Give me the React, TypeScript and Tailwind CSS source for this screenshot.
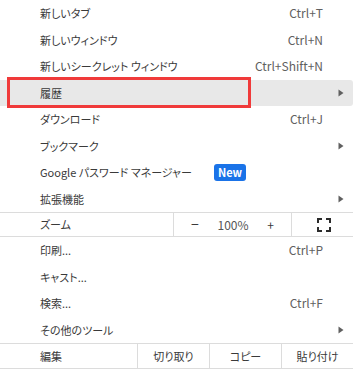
import React from "react";

type Item = {
  label: string;
  shortcut?: string;
  submenu?: boolean;
  badge?: string;
  active?: boolean;
};

const topItems: Item[] = [
  { label: "新しいタブ", shortcut: "Ctrl+T" },
  { label: "新しいウィンドウ", shortcut: "Ctrl+N" },
  { label: "新しいシークレット ウィンドウ", shortcut: "Ctrl+Shift+N" },
  { label: "履歴", submenu: true, active: true },
  { label: "ダウンロード", shortcut: "Ctrl+J" },
  { label: "ブックマーク", submenu: true },
  { label: "Google パスワード マネージャー", badge: "New" },
  { label: "拡張機能", submenu: true },
];

const midItems: Item[] = [
  { label: "印刷...", shortcut: "Ctrl+P" },
  { label: "キャスト..." },
  { label: "検索...", shortcut: "Ctrl+F" },
  { label: "その他のツール", submenu: true },
];

function Arrow() {
  return (
    <svg width="6" height="8" viewBox="0 0 6 8" className="mr-[9px]">
      <path d="M0.5 0.5 L5.5 4 L0.5 7.5 Z" fill="#606060" />
    </svg>
  );
}

function Row({ item }: { item: Item }) {
  return (
    <div
      className={`flex h-[26.5px] items-center pl-[40px] ${
        item.active ? "bg-[#e8e8e8] rounded-r-[3px]" : ""
      }`}
    >
      {item.badge ? (
        <div className="flex flex-1 items-center">
          <span className="w-[174px] whitespace-nowrap">{item.label}</span>
          <span className="rounded-[3px] bg-[#1a73e8] px-[4px] text-[11px] font-bold leading-[17px] text-white">
            {item.badge}
          </span>
        </div>
      ) : (
        <span className="flex-1 whitespace-nowrap">{item.label}</span>
      )}
      {item.shortcut && (
        <span className="pr-[30px] text-[12px] text-[#606060]">{item.shortcut}</span>
      )}
      {item.submenu && <Arrow />}
    </div>
  );
}

function FullscreenIcon() {
  return (
    <svg width="14" height="14" viewBox="0 0 14 14" fill="none" stroke="#2b2b2b" strokeWidth="2">
      <path d="M1 5 V1 H5" />
      <path d="M9 1 H13 V5" />
      <path d="M13 9 V13 H9" />
      <path d="M5 13 H1 V9" />
    </svg>
  );
}

export default function App() {
  return (
    <div
      className="relative h-[374px] w-[353px] overflow-hidden bg-white text-[11px] text-[#3a3a3a] [font-feature-settings:'palt']"
      style={{ fontFamily: '"Noto Sans CJK JP", "Noto Sans", sans-serif' }}
    >
      {topItems.map((it) => (
        <Row key={it.label} item={it} />
      ))}

      {/* zoom row */}
      <div className="flex h-[25px] items-stretch border-y border-[#dcdcdc]">
        <div className="flex w-[173px] items-center pl-[40px]">ズーム</div>
        <div className="flex w-[119px] items-center justify-between border-x border-[#dcdcdc] px-[17px] text-[12px]">
          <span className="text-[14px]">−</span>
          <span className="text-[#555555]">100%</span>
          <span>+</span>
        </div>
        <div className="flex flex-1 items-center justify-center pl-[2px]">
          <FullscreenIcon />
        </div>
      </div>

      {midItems.map((it) => (
        <Row key={it.label} item={it} />
      ))}

      {/* edit row */}
      <div className="flex h-[26px] items-stretch border-y border-[#dcdcdc]">
        <div className="flex w-[137px] items-center pl-[40px]">編集</div>
        <div className="flex w-[72px] items-center justify-center border-l border-[#dcdcdc]">切り取り</div>
        <div className="flex w-[73px] items-center justify-center border-x border-[#dcdcdc]">コピー</div>
        <div className="flex flex-1 items-center justify-center">貼り付け</div>
      </div>

      {/* annotation box */}
      <div className="pointer-events-none absolute left-[7px] top-[77px] h-[31px] w-[244px] border-[3px] border-[#f03a3a]" />
    </div>
  );
}
